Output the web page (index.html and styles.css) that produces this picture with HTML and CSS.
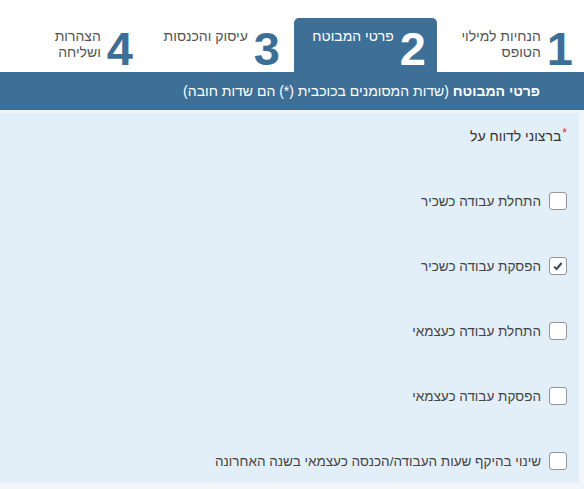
FILE: index.html
```html
<!DOCTYPE html>
<html lang="he" dir="rtl">
<head>
<meta charset="utf-8">
<link rel="stylesheet" href="styles.css">
</head>
<body>
<div class="page">
  <nav class="tabs">
    <div class="tab">
      <span class="num">1</span>
      <span class="tab-text">הנחיות למילוי<br>הטופס</span>
    </div>
    <div class="tab active">
      <span class="num">2</span>
      <span class="tab-text">פרטי המבוטח</span>
    </div>
    <div class="tab">
      <span class="num">3</span>
      <span class="tab-text">עיסוק והכנסות</span>
    </div>
    <div class="tab">
      <span class="num">4</span>
      <span class="tab-text">הצהרות<br>ושליחה</span>
    </div>
  </nav>
  <div class="bar"><b>פרטי המבוטח</b> (שדות המסומנים בכוכבית (*) הם שדות חובה)</div>
  <div class="sep"></div>
  <section class="panel">
    <div class="row question"><span class="req">*</span>ברצוני לדווח על</div>
    <label class="row option"><span class="box"></span><span class="opt-text">התחלת עבודה כשכיר</span></label>
    <label class="row option"><span class="box checked"><svg viewBox="0 0 18 18" width="18" height="18"><path d="M5.2 9.6 L7.6 12 L12.6 6" fill="none" stroke="#34495e" stroke-width="2"/></svg></span><span class="opt-text">הפסקת עבודה כשכיר</span></label>
    <label class="row option"><span class="box"></span><span class="opt-text">התחלת עבודה כעצמאי</span></label>
    <label class="row option"><span class="box"></span><span class="opt-text">הפסקת עבודה כעצמאי</span></label>
    <label class="row option"><span class="box"></span><span class="opt-text">שינוי בהיקף שעות העבודה/הכנסה כעצמאי בשנה האחרונה</span></label>
  </section>
</div>
</body>
</html>
```
FILE: styles.css
```css
html, body {
  margin: 0;
  padding: 0;
  background: #f3f6f8;
}
body {
  font-family: "Liberation Sans", Arial, "DejaVu Sans", sans-serif;
  direction: rtl;
  width: 584px;
  height: 489px;
  overflow: hidden;
}
.page {
  width: 584px;
  background: #f3f6f8;
}
.tabs {
  height: 72px;
  display: flex;
  align-items: flex-end;
  gap: 3px;
  background: #ffffff;
}
.tab {
  width: 144px;
  height: 54px;
  box-sizing: border-box;
  padding: 7px 11px 0 0;
  display: flex;
  align-items: flex-start;
  gap: 6px;
  border-radius: 5px 5px 0 0;
  color: #555;
}
.tab.active {
  width: 143px;
  background: #3e6f97;
  color: #ffffff;
}
.num {
  font-size: 47px;
  line-height: 47px;
  font-weight: bold;
  color: #3d6f96;
}
.tab.active .num {
  color: #ffffff;
}
.tab-text {
  margin-top: 3px;
  font-size: 14px;
  line-height: 16px;
}
.bar {
  height: 38px;
  box-sizing: border-box;
  padding-right: 44px;
  background: #3e6f97;
  color: #ffffff;
  font-size: 14px;
  line-height: 38px;
}
.sep {
  height: 3px;
  background: #eef4f8;
}
.panel {
  width: 579px;
  margin-left: 0;
  margin-right: auto;
  box-sizing: border-box;
  background: #e3eff8;
  padding: 13px 12px 12px 0;
  display: flex;
  flex-direction: column;
  gap: 45px;
}
.row {
  height: 20px;
  display: flex;
  align-items: center;
}
.question {
  font-size: 14px;
  color: #333;
}
.req {
  color: #c0392b;
  font-size: 12px;
  align-self: flex-start;
  margin-top: 0;
  margin-left: 1px;
}
.option {
  gap: 8px;
}
.box {
  width: 18px;
  height: 18px;
  box-sizing: border-box;
  border: 1px solid #959595;
  border-radius: 3px;
  background: #ffffff;
  display: flex;
  align-items: center;
  justify-content: center;
}
.box svg {
  display: block;
  margin: -1px;
}
.opt-text {
  font-size: 13.5px;
  color: #444;
}
```
